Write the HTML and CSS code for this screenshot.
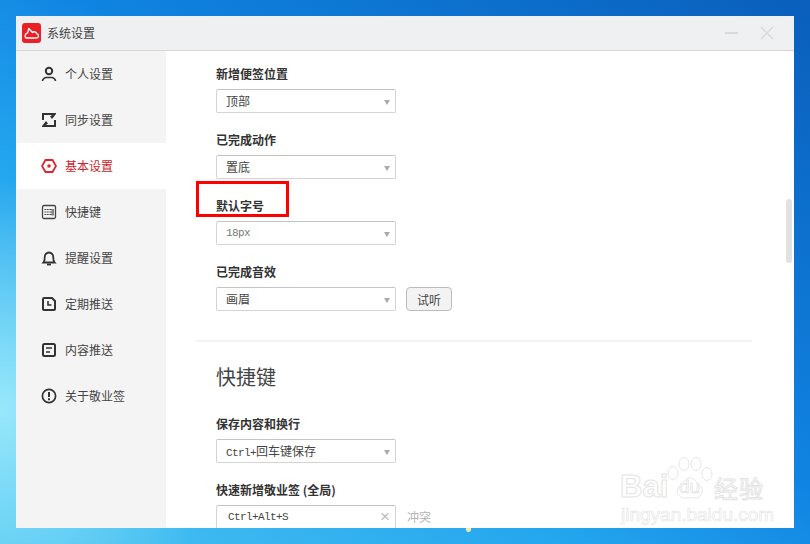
FILE: index.html
```html
<!DOCTYPE html>
<html lang="zh-CN">
<head>
    <meta charset="UTF-8">
    <meta name="viewport" content="width=device-width, initial-scale=1.0">
    <title>系统设置</title>
    <link rel="stylesheet" href="styles.css">
</head>

<body>
    <div class="window">
        <header class="titlebar">
            <svg class="logo" viewBox="0 0 19 20">
                <rect width="19" height="20" rx="3" fill="#ea2027"/>
                <path d="M4.500 15h10c2.400 0 2.800-3.800.2-4.300-.6-2-2.900-2.500-4.300-1.200L6.800 5.500 5.600 9.800C2.800 10.300 2.300 14.500 4.500 15z" fill="none" stroke="#fff" stroke-width="1.300" stroke-linejoin="round"/>
            </svg>
            <span class="titlebar-text">系统设置</span>
            <div class="window-btns">
                <svg class="win-icon" viewBox="0 0 14 14"><path d="M0 7h13" stroke="#d9dadc" stroke-width="2"/></svg>
                <svg class="win-icon" viewBox="0 0 14 14"><path d="M1 1l12 12M13 1L1 13" stroke="#d9dadc" stroke-width="1.500"/></svg>
            </div>
        </header>

        <div class="content">
            <nav class="sidebar">
                <a class="nav-item">
                    <svg class="nav-icon" viewBox="0 0 16 16"><circle cx="8" cy="5" r="3.200" fill="none" stroke="#333" stroke-width="2"/><path d="M1.500 15c0-2.500 3-3.500 3.500-3.500h6c.5 0 3.500 1 3.500 3.500" fill="none" stroke="#333" stroke-width="1.600"/></svg>
                    个人设置
                </a>
                <a class="nav-item">
                    <svg class="nav-icon" viewBox="0 0 16 16"><path d="M1 1h14v1l-4 5-2-2.500L11 3H3v5H1z" fill="#333"/><path d="M15 15H1v-1l4-5 2 2.500L5 13h8V8h2z" fill="#333"/></svg>
                    同步设置
                </a>
                <a class="nav-item active">
                    <svg class="nav-icon" viewBox="0 0 16 16"><path d="M4.500 2h7L15 8l-3.500 6h-7L1 8z" fill="none" stroke="#e4232b" stroke-width="1.800"/><circle cx="8" cy="8" r="1.800" fill="#e4232b"/></svg>
                    基本设置
                </a>
                <a class="nav-item">
                    <svg class="nav-icon" viewBox="0 0 16 16"><rect x="1.500" y="1.500" width="13" height="13" rx="1.500" fill="none" stroke="#444" stroke-width="1.300"/><path d="M3.500 5h9v1h-9zM3.500 7.500h9v1h-9zM3.500 10h9v1h-9z" fill="#444"/><path d="M5.500 4.500v7M8 4.500v7" stroke="#fff" stroke-width=".6"/><rect x="10.500" y="5" width="2.500" height="6.500" fill="#888"/></svg>
                    快捷键
                </a>
                <a class="nav-item">
                    <svg class="nav-icon" viewBox="0 0 16 16"><path d="M2.500 12.500c1-1 1.200-2 1.200-5 0-2.800 1.800-5 4.300-5s4.300 2.200 4.300 5c0 3 .2 4 1.200 5z" fill="none" stroke="#333" stroke-width="1.800"/><path d="M6 14.500h4" stroke="#333" stroke-width="1.800"/></svg>
                    提醒设置
                </a>
                <a class="nav-item">
                    <svg class="nav-icon" viewBox="0 0 16 16"><path d="M3 2h8l3 3v8a1 1 0 0 1-1 1H3a1 1 0 0 1-1-1V3a1 1 0 0 1 1-1z" fill="none" stroke="#333" stroke-width="2"/><path d="M7 5v4h3.500" fill="none" stroke="#333" stroke-width="1.600"/></svg>
                    定期推送
                </a>
                <a class="nav-item">
                    <svg class="nav-icon" viewBox="0 0 16 16"><rect x="2" y="2" width="12" height="12" rx="1.500" fill="none" stroke="#333" stroke-width="2"/><path d="M5 6h6M5 10h4" stroke="#333" stroke-width="1.600"/></svg>
                    内容推送
                </a>
                <a class="nav-item">
                    <svg class="nav-icon" viewBox="0 0 16 16"><circle cx="8" cy="8" r="6.600" fill="none" stroke="#333" stroke-width="1.700"/><path d="M8 4v5" stroke="#333" stroke-width="2"/><path d="M8 10.300v2" stroke="#333" stroke-width="2"/></svg>
                    关于敬业签
                </a>
            </nav>

            <main class="main">
                <div class="field">
                    <div class="field-label">新增便签位置</div>
                    <div class="select">顶部</div>
                </div>
                <div class="field">
                    <div class="field-label">已完成动作</div>
                    <div class="select">置底</div>
                </div>
                <div class="field">
                    <div class="field-label">默认字号</div>
                    <div class="select mono muted">18px</div>
                </div>
                <div class="field">
                    <div class="field-label">已完成音效</div>
                    <div class="row">
                        <div class="select">画眉</div>
                        <button class="btn">试听</button>
                    </div>
                </div>

                <div class="divider"></div>
                <h2 class="section-title">快捷键</h2>

                <div class="field">
                    <div class="field-label">保存内容和换行</div>
                    <div class="select"><span class="mono">Ctrl+</span>回车键保存</div>
                </div>
                <div class="field">
                    <div class="field-label">快速新增敬业签 (全局)</div>
                    <div class="row">
                        <div class="shortcut-input mono">Ctrl+Alt+S<span class="clear">×</span></div>
                        <span class="conflict">冲突</span>
                    </div>
                </div>

                <div class="highlight-box"></div>
            </main>
        </div>

        <div class="scrollbar"></div>

        <div class="watermark">
            <svg class="paw" viewBox="0 0 46 44">
                <g fill="#fff" stroke="#e6e6e6" stroke-width="1">
                    <ellipse cx="6" cy="16" rx="5" ry="6.500"/>
                    <ellipse cx="17" cy="7" rx="5" ry="6.500"/>
                    <ellipse cx="29" cy="7" rx="5" ry="6.500"/>
                    <ellipse cx="40" cy="17" rx="5" ry="6.500"/>
                    <path d="M23 21c5 0 6 5 10 8 5 4 1 13-6 12-2 0-6-1-8 0-7 1-12-7-6-12 4-3 5-8 10-8z"/>
                </g>
            </svg>
            <span class="wm-du">du</span>
            <span class="wm-bai">Bai</span>
            <span class="wm-jy">经验</span>
            <span class="wm-url">jingyan.baidu.com</span>
        </div>
    </div>
    <div class="tray-pin"></div>
</body>
</html>
```

FILE: styles.css
```css
* {
    box-sizing: border-box;
    font-family: "Noto Sans CJK SC", "Liberation Sans", sans-serif;
}

html, body {
    height: 100%;
}

body {
    position: relative;
    margin: 0;
    padding: 16px;
    overflow: hidden;
    background:
        radial-gradient(circle 230px at 0 410px, #98e8fb, rgba(152, 232, 251, 0)),
        linear-gradient(to top right, #4cc4f2, #24a6ee 35%, #1084e2 55%, #0a5fbb);
}

.window {
    position: relative;
    width: 778px;
    height: 512px;
    background: #fff;
    overflow: hidden;
    display: flex;
    flex-direction: column;
}

.titlebar {
    height: 35px;
    flex-shrink: 0;
    display: flex;
    align-items: center;
    padding-left: 6px;
    background: #eff0f2;
    border-bottom: 1px solid #d5d6d8;
}

.logo {
    width: 19px;
    height: 20px;
    margin-right: 6px;
}

.titlebar-text {
    font-size: 12px;
    line-height: 16px;
    margin-bottom: 1px;
    color: #444;
}

.window-btns {
    margin-left: auto;
    margin-right: 20px;
    display: flex;
    gap: 21px;
}

.win-icon {
    width: 14px;
    height: 14px;
    display: block;
}

.content {
    flex: 1;
    display: flex;
    min-height: 0;
}

.sidebar {
    width: 150px;
    flex-shrink: 0;
    background: #f4f4f4;
}

.nav-item {
    height: 46px;
    display: flex;
    align-items: center;
    gap: 8px;
    padding-left: 25px;
    padding-bottom: 2px;
    font-size: 12px;
    color: #444;
}

.nav-item.active {
    background: #fff;
    color: #c9252c;
}

.nav-icon {
    width: 16px;
    height: 16px;
    margin-top: 2px;
    flex-shrink: 0;
}

.main {
    position: relative;
    flex: 1;
    padding: 13px 42px 0 50px;
    overflow: hidden;
}

.field {
    margin-bottom: 17px;
}

.field-label {
    height: 20px;
    line-height: 20px;
    margin-bottom: 5px;
    font-size: 12px;
    font-weight: bold;
    color: #333;
}

.select {
    position: relative;
    width: 180px;
    height: 24px;
    line-height: 22px;
    padding-left: 9px;
    font-size: 12px;
    color: #444;
    background: #fff;
    border: 1px solid #d4d4d4;
    border-top-color: #c4c4c4;
    border-radius: 2px;
}

.select::after {
    content: '';
    position: absolute;
    right: 5px;
    top: 10px;
    border-left: 3.5px solid transparent;
    border-right: 3.5px solid transparent;
    border-top: 5px solid #aaa;
}

.mono {
    font-family: "Liberation Mono", monospace;
    font-size: 11px;
    letter-spacing: -0.6px;
}

.muted {
    color: #777;
}

.row {
    display: flex;
    align-items: center;
    gap: 10px;
}

.btn {
    width: 46px;
    height: 24px;
    padding: 0;
    font-size: 12px;
    color: #444;
    background: #f3f3f3;
    border: 1px solid #bbb;
    border-radius: 4px;
}

.divider {
    height: 2px;
    margin: 29px 0 20px -20px;
    background: #f3f3f3;
}

.section-title {
    height: 30px;
    line-height: 30px;
    margin: 0 0 22px;
    font-size: 20px;
    font-weight: normal;
    color: #444;
}

.shortcut-input {
    position: relative;
    width: 180px;
    height: 30px;
    line-height: 22px;
    padding-left: 11px;
    color: #444;
    border: 1px solid #d4d4d4;
    border-top-color: #c4c4c4;
    border-radius: 2px;
}

.clear {
    position: absolute;
    right: 5px;
    top: 0;
    font-family: "Liberation Sans", sans-serif;
    font-size: 17px;
    letter-spacing: 0;
    color: #bbb;
}

.conflict {
    align-self: flex-start;
    margin-left: 1px;
    line-height: 24px;
    font-size: 12px;
    color: #b4b4b4;
}

.highlight-box {
    position: absolute;
    left: 30px;
    top: 130px;
    width: 93px;
    height: 36px;
    border: 3px solid #fe0000;
}

.scrollbar {
    position: absolute;
    left: 770px;
    top: 183px;
    width: 6px;
    height: 64px;
    border-radius: 3px;
    background: #e2e2e2;
}

.tray-pin {
    position: absolute;
    left: 466px;
    top: 528px;
    width: 5px;
    height: 4px;
    border-radius: 0 0 3px 3px;
    background: #f3e6a0;
}

/* 水印 */
.watermark {
    position: absolute;
    left: 604px;
    top: 441px;
    width: 150px;
    height: 70px;
    color: #fff;
    pointer-events: none;
}

.paw {
    position: absolute;
    left: 47px;
    top: 0;
    width: 46px;
    height: 44px;
}

.wm-du, .wm-bai, .wm-jy, .wm-url {
    position: absolute;
    color: #fff;
    -webkit-text-stroke: 1px #e4e4e4;
}

.wm-bai {
    left: 0;
    top: 13px;
    font-family: "Liberation Sans", sans-serif;
    font-size: 31px;
    line-height: 34px;
    font-weight: bold;
}

.wm-du {
    left: 59px;
    top: 19px;
    font-family: "Liberation Sans", sans-serif;
    font-size: 19px;
    line-height: 22px;
    -webkit-text-stroke: 0.6px #dcdcdc;
}

.wm-jy {
    left: 94px;
    top: 16px;
    font-size: 24px;
    line-height: 30px;
    letter-spacing: 1px;
}

.wm-url {
    left: 1px;
    top: 47px;
    font-family: "Liberation Sans", sans-serif;
    font-size: 19px;
    line-height: 22px;
    -webkit-text-stroke: 0.6px #e4e4e4;
    white-space: nowrap;
}
```
